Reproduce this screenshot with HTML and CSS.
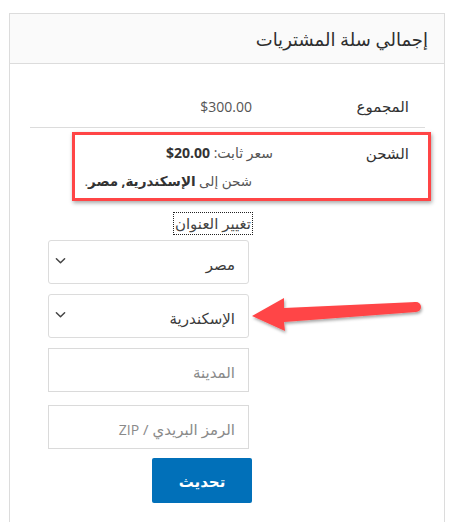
FILE: index.html
```html
<!DOCTYPE html>
<html lang="ar" dir="rtl">
<head>
<meta charset="utf-8">
<link rel="stylesheet" href="styles.css">
</head>
<body>
<div class="cart-totals">
  <h2 class="totals-title">إجمالي سلة المشتريات</h2>
  <div class="totals-body">
    <div class="row row-subtotal">
      <div class="label">المجموع</div>
      <div class="value"><bdi class="num">$300.00</bdi></div>
    </div>
    <div class="row row-shipping">
      <div class="label">الشحن</div>
      <div class="value">
        <div class="method">سعر ثابت: <bdi class="num strong">$20.00</bdi></div>
        <div class="dest">شحن إلى <b>الإسكندرية, مصر</b>.</div>
        <div class="change-wrap"><a class="change">تغيير العنوان</a></div>
        <div class="form">
          <div class="field select"><span>مصر</span><svg class="chev" viewBox="0 0 12 8"><path d="M1.5 1.5 L6 6 L10.5 1.5" fill="none" stroke="#444" stroke-width="1.6" stroke-linecap="round" stroke-linejoin="round"/></svg></div>
          <div class="field select"><span>الإسكندرية</span><svg class="chev" viewBox="0 0 12 8"><path d="M1.5 1.5 L6 6 L10.5 1.5" fill="none" stroke="#444" stroke-width="1.6" stroke-linecap="round" stroke-linejoin="round"/></svg></div>
          <div class="field input"><span class="ph">المدينة</span></div>
          <div class="field input zip"><span class="ph">الرمز البريدي / <span class="num">ZIP</span></span></div>
          <div class="btn-wrap"><button class="btn">تحديث</button></div>
        </div>
      </div>
    </div>
  </div>
</div>
<div class="highlight"></div>
<svg class="arrow" width="455" height="522" viewBox="0 0 455 522">
  <defs>
    <filter id="sh" x="-20%" y="-50%" width="140%" height="200%">
      <feDropShadow dx="1" dy="2" stdDeviation="1.5" flood-color="#000" flood-opacity="0.35"/>
    </filter>
  </defs>
  <g filter="url(#sh)" fill="#ff4546">
    <polygon points="252,316 284,298 284,308 416,302 416,312 284,322 285,331"/>
    <circle cx="416" cy="307" r="5"/>
  </g>
</svg>
</body>
</html>
```
FILE: styles.css
```css
html, body {
  margin: 0;
  padding: 0;
  background: #fff;
}
body {
  padding: 13px 10px 0 10px;
  font-family: "Open Sans", "DejaVu Sans", sans-serif;
  color: #3a3a3a;
  height: 522px;
  box-sizing: border-box;
  overflow: hidden;
  position: relative;
}
.cart-totals {
  width: 436px;
  box-sizing: border-box;
  border: 1px solid #dcdcdc;
  border-bottom: none;
  height: 600px;
}
.totals-title {
  margin: 0;
  height: 50px;
  box-sizing: border-box;
  background: #fafafa;
  border-bottom: 1px solid #dcdcdc;
  font-size: 18px;
  font-weight: normal;
  padding: 0 16px;
  line-height: 50px;
  color: #2e2e2e;
}
.totals-body {
  padding: 16px 19px 0 20px;
}
.num {
  font-size: 14px;
}
.strong {
  font-weight: bold;
  color: #333;
}
.row {
  display: flex;
}
.row-subtotal {
  border-bottom: 1px solid #dcdcdc;
}
.label {
  width: 141px;
  padding: 0 16px;
  font-size: 15px;
  font-weight: normal;
  color: #333;
}
.row-subtotal .label,
.row-subtotal .value {
  padding-top: 14px;
  padding-bottom: 8px;
  line-height: 24px;
}
.value {
  flex: 1;
  font-size: 15px;
  padding-right: 0;
  padding-left: 18px;
}
.row-subtotal .value {
  color: #555;
}
.row-shipping .label {
  padding-top: 13px;
  line-height: 24px;
}
.row-shipping .value {
  padding-top: 13px;
  color: #555;
}
.method {
  line-height: 24px;
  margin-right: -21px;
  font-size: 14px;
}
.dest b {
  color: #333;
}
.dest {
  line-height: 24px;
  margin-top: 4px;
  font-size: 13.5px;
}
.change-wrap {
  margin-top: 20px;
  height: 22px;
}
.change {
  display: inline-block;
  outline: 1px dotted #222;
  line-height: 21px;
  color: #444;
  font-size: 15px;
  padding: 0 1px;
}
.form {
  margin-top: 5px;
  width: 201px;
  margin-right: 3px;
}
.field {
  height: 44px;
  box-sizing: border-box;
  border: 1px solid #dcdcdc;
  display: flex;
  align-items: center;
  padding: 0 13px 0 6px;
  font-size: 15px;
  color: #3a3a3a;
  margin-bottom: 10px;
}
.select {
  border-radius: 3px;
  justify-content: space-between;
}
.select span {
  padding-top: 4px;
}
.chev {
  width: 11px;
  height: 8px;
  margin-top: -2px;
}
.input {
  border-color: #dadada;
}
.ph {
  color: #8a8a8a;
  padding-top: 4px;
}
.zip {
  margin-top: 13px;
  margin-bottom: 9px;
}
.btn-wrap {
  display: flex;
  justify-content: flex-start;
  margin-right: -3px;
}
.btn {
  width: 100px;
  height: 45px;
  border: none;
  border-radius: 2px;
  background: #0170b9;
  color: #fff;
  font-family: "Open Sans", "DejaVu Sans", sans-serif;
  font-size: 15px;
  font-weight: bold;
  padding: 0;
}
.highlight {
  position: absolute;
  left: 72px;
  top: 132px;
  width: 359px;
  height: 69px;
  box-sizing: border-box;
  border: 3px solid #ff4546;
  box-shadow: 1px 2px 4px rgba(0,0,0,0.35);
}
.arrow {
  position: absolute;
  left: 0;
  top: 0;
  pointer-events: none;
}
```
